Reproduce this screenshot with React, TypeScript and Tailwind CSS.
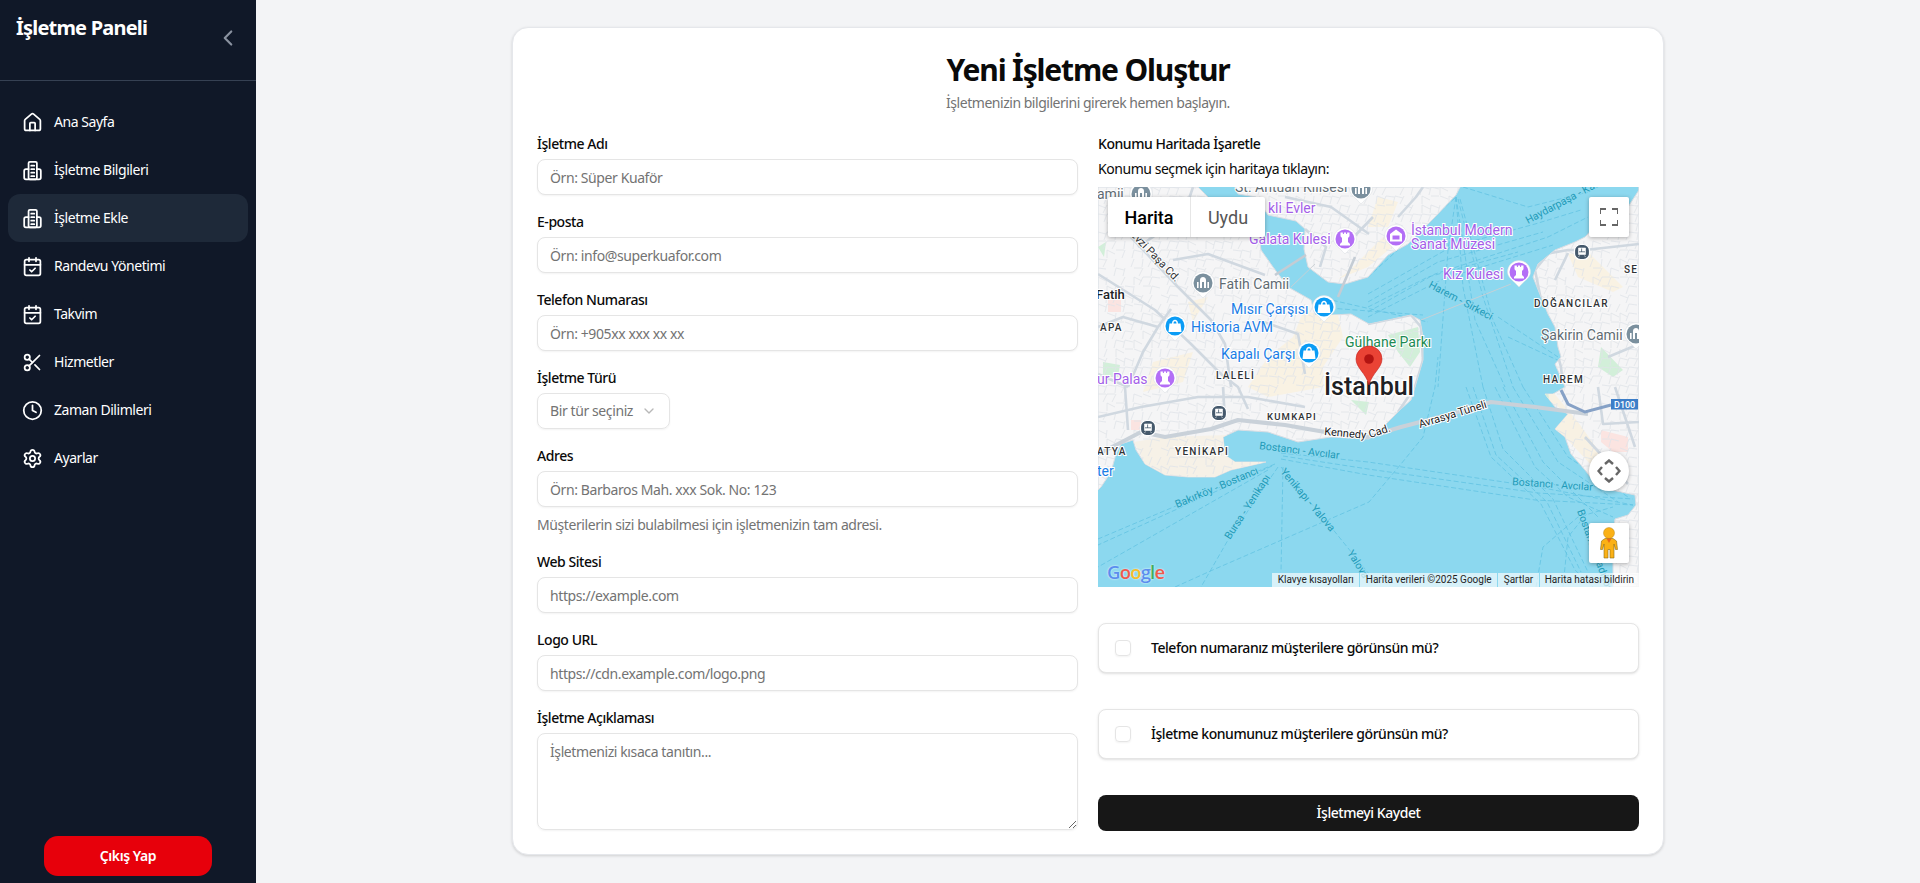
import { CalendarCheck, ChevronDown, ChevronLeft, Clock, House, Scissors, Settings } from "lucide-react";
import type { ReactNode } from "react";

function BuildingIcon() {
  return (
    <svg width="21" height="21" viewBox="0 0 24 24" fill="none" stroke="currentColor" strokeWidth="2" strokeLinecap="round" strokeLinejoin="round">
      <rect x="7.5" y="2" width="9.5" height="20" rx="1.5" />
      <path d="M10.5 6.5h3.5M10.5 10.5h3.5M10.5 14.5h3.5M10.5 18.5h3.5" />
      <path d="M7.5 10.5H4.5a2 2 0 0 0-2 2V20a2 2 0 0 0 2 2h15a2 2 0 0 0 2-2v-7.5a2 2 0 0 0-2-2h-2.5" />
    </svg>
  );
}

const navItems: { label: string; icon: ReactNode; active?: boolean }[] = [
  { label: "Ana Sayfa", icon: <House size={21} /> },
  { label: "İşletme Bilgileri", icon: <BuildingIcon /> },
  { label: "İşletme Ekle", icon: <BuildingIcon />, active: true },
  { label: "Randevu Yönetimi", icon: <CalendarCheck size={21} /> },
  { label: "Takvim", icon: <CalendarCheck size={21} /> },
  { label: "Hizmetler", icon: <Scissors size={21} /> },
  { label: "Zaman Dilimleri", icon: <Clock size={21} /> },
  { label: "Ayarlar", icon: <Settings size={21} /> },
];

function Sidebar() {
  return (
    <aside className="flex h-full w-64 shrink-0 flex-col bg-[#101828] text-white">
      <div className="flex h-[81px] items-start justify-between border-b border-[#364153] pl-4 pr-[15px] pt-[14px]">
        <h2 className="text-xl leading-7 font-bold tracking-[-0.8px]">İşletme Paneli</h2>
        <ChevronLeft size={26} className="mt-[11px] text-[#8a92a0]" />
      </div>
      <nav className="mt-[17px] flex flex-col px-2">
        {navItems.map((item) => (
          <div
            key={item.label}
            className={`flex h-12 items-center gap-[11px] rounded-xl pl-[14px] text-sm tracking-[-0.45px] ${item.active ? "bg-[#1e2939]" : ""}`}
          >
            {item.icon}
            <span>{item.label}</span>
          </div>
        ))}
      </nav>
      <div className="mt-auto flex justify-center pb-[7px]">
        <button className="h-10 w-[168px] rounded-[14px] bg-[#e7000b] text-sm font-semibold tracking-[-0.45px] text-white">Çıkış Yap</button>
      </div>
    </aside>
  );
}

function Field({ label, placeholder, hint }: { label: string; placeholder: string; hint?: string }) {
  return (
    <div className="flex flex-col">
      <label className="mb-2 text-sm leading-[14px] font-medium tracking-[-0.45px] text-[#0a0a0a]">{label}</label>
      <input
        placeholder={placeholder}
        className="h-9 w-full rounded-lg border border-[#e5e5e5] bg-white px-3 text-sm tracking-[-0.4px] shadow-xs outline-none placeholder:text-[#737373]"
      />
      {hint && <p className="mt-2 text-sm tracking-[-0.42px] text-[#737373]">{hint}</p>}
    </div>
  );
}

function CheckCard({ label }: { label: string }) {
  return (
    <div className="flex h-[50px] items-center gap-5 rounded-lg border border-[#e5e5e5] bg-white px-4 shadow-sm">
      <span className="size-4 rounded-[4px] border border-[#e5e5e5] shadow-xs" />
      <span className="text-sm font-medium tracking-[-0.45px] text-[#0a0a0a]">{label}</span>
    </div>
  );
}

/* ---- map drawing ---- */

const land = [
  // european side, south of the golden horn
  "M0 0 L100 0 L120 20 L150 35 L161 50 L163 63 L175 80 L190 100 L213 113 L217 128 L233 128 L253 127 L271 137 L290 133 L313 128 L322 133 L325 150 L325 173 L317 200 L313 213 L303 222 L285 240 L271 252 L233 250 L200 255 L170 245 L140 243 L125 250 L127 268 L137 275 L168 275 L133 283 L117 290 L90 290 L67 288 L47 277 L38 263 L35 253 L23 257 L18 267 L13 285 L3 300 L0 303 Z",
  // beyoglu side
  "M137 0 L140 7 L158 10 L170 28 L198 34 L207 42 L206 62 L210 80 L230 95 L247 97 L270 90 L290 68 L310 57 L337 30 L358 8 L362 0 Z",
  // asian side
  "M541 0 L541 3 L530 20 L503 33 L487 50 L477 55 L457 63 L440 77 L435 90 L443 110 L450 127 L457 140 L460 160 L463 170 L457 177 L467 200 L455 207 L447 207 L457 220 L470 227 L457 242 L467 250 L473 267 L487 283 L500 300 L537 308 L538 318 L530 328 L517 332 L515 350 L515 385 L515 400 L541 400 Z",
];

function streetPath() {
  let d = "";
  for (let x = 0; x < 560; x += 9) {
    for (let y = 0; y < 400; y += 9) {
      const h = (x * 7 + y * 13 + x * y) % 17;
      const dx = (h % 5) - 2;
      if (h % 3 !== 0) d += `M${x} ${y}l8 ${2 + dx}`;
      if (h % 4 !== 1) d += `M${x} ${y}l${dx - 2} 8`;
    }
  }
  return d;
}

const majorRoads = [
  "M0 87L57 123L93 157L123 187L140 200L150 222",
  "M33 50L80 100L113 133L127 157L133 200",
  "M0 187L30 200M30 200L45 165L60 140L73 122",
  "M75 73L110 67L167 88",
  "M0 230L43 220L100 210L150 210L207 220",
  "M125 200L127 233M27 200L30 243",
  "M160 133L200 147L207 187",
  "M187 10L233 20L271 47M300 30L318 10L325 0",
  "M447 67L470 63L487 63L541 57",
  "M450 67L437 83L443 113L455 150L463 180L465 200",
  "M457 93L470 66M510 170L541 157M517 200L537 260M487 250L530 297M500 200L505 237L541 235",
  "M40 60L85 30L95 0M0 140L25 130L60 140",
  "M207 42L228 60L222 80M246 60L275 30",
];

const ferryLines = [
  "M183 266L270 275L440 300L535 318",
  "M183 272L270 288L437 313L535 318",
  "M185 269L270 282L440 306L535 312",
  "M177 277L0 352",
  "M174 279L0 358",
  "M170 283L0 380",
  "M180 280L130 353L103 400",
  "M183 280L233 340L271 387",
  "M185 280L183 385",
  "M77 400L117 382L271 315L303 277L325 250L337 200L340 170",
  "M368 200L393 270L443 317L477 383L495 400",
  "M375 200L398 268L449 315L483 385",
  "M385 200L405 262L455 312L490 385",
  "M397 200L437 280L470 310L515 330",
  "M415 200L460 275L520 315",
  "M405 200L445 275L500 330",
  "M425 200L470 270L530 310",
  "M270 107L353 60L437 37L483 23",
  "M270 125L337 87L450 50L490 30",
  "M270 115L340 75L445 45",
  "M270 130L345 92L455 58",
  "M270 120L330 90L420 65",
  "M358 10L350 63L340 200",
  "M358 10L377 133L407 200",
  "M362 12L395 133L425 200",
  "M358 10L365 100L385 200",
  "M360 12L385 110L415 200",
  "M270 90L358 10",
  "M365 0L430 20L490 5",
  "M410 150L470 178",
  "M400 130L460 170",
  "M220 110L330 135",
  "M217 120L325 128",
  "M438 400L445 360L480 330L515 320",
  "M465 400L470 350L490 325",
];

function Pin({ x, y, color, kind }: { x: number; y: number; color: string; kind: "rook" | "bag" | "temple" | "museum" }) {
  return (
    <g transform={`translate(${x} ${y})`}>
      <path d="M-11.5 0A11.5 11.5 0 1 1 11.5 0C11.5 6 5 9 0 15C-5 9 -11.5 6 -11.5 0Z" fill="#fff" stroke="#d9dde0" strokeWidth="0.5" />
      <circle r="9.5" fill={color} />
      {kind === "rook" && <path d="M-4.5 -6.5h2.4v1.6h1v-1.6h2.2v1.6h1v-1.6H4.5v3.8L3 -1V3L5 5V6.5H-5V5L-3 3V-1L-4.5 -2.7Z" fill="#fff" />}
      {kind === "bag" && <path d="M-5.5 -2.5h11L6.5 6h-13ZM-3 -2.5C-3 -7.5 3 -7.5 3 -2.5H1.5C1.5 -5.5 -1.5 -5.5 -1.5 -2.5Z" fill="#fff" />}
      {kind === "temple" && <path d="M-6 5V-1h1.6v6ZM-3 5V-3C-3 -7 3 -7 3 -3V5H1V-1H-1V5ZM4.4 5V-1H6V5Z" fill="#fff" />}
      {kind === "museum" && <path d="M-6 -2L0 -6.5L6 -2V5.5H-6ZM-3.5 -.5V3.5H3.5V-.5Z" fill="#fff" fillRule="evenodd" />}
    </g>
  );
}

function Transit({ x, y }: { x: number; y: number }) {
  return (
    <g transform={`translate(${x} ${y})`}>
      <rect x="-7.5" y="-7.5" width="15" height="15" rx="6" fill="#45596c" stroke="#fff" strokeWidth="1.2" />
      <path d="M-3.5 -4H3.5V2.5H-3.5Z M-2.5 3.5L-3.5 5M2.5 3.5L3.5 5" fill="#fff" stroke="#fff" strokeWidth="0.6" />
      <path d="M-.4 -3.5V0M-3 -.2H3" stroke="#45596c" strokeWidth="0.8" />
    </g>
  );
}

type Lbl = { t: string; x: number; y: number; c: string; s?: number; w?: number; ls?: number; r?: number; halo?: string };

const PURPLE = "#a35ee8";
const BLUE = "#1a7de6";
const GREY = "#5f6b72";
const DARK = "#2f3235";
const TEAL = "#1f9bb8";
const WATER = "#8cd8ef";

const labels: Lbl[] = [
  { t: "amii", x: -1, y: 12, c: GREY, s: 14 },
  { t: "St. Antuan Kilisesi", x: 137, y: 5, c: GREY, s: 14 },
  { t: "kli Evler", x: 170, y: 26, c: PURPLE, s: 14 },
  { t: "Galata Kulesi", x: 151, y: 57, c: PURPLE, s: 14 },
  { t: "Fevzi Paşa Cd.", x: 28, y: 44, c: DARK, s: 11, r: 46 },
  { t: "Fatih Camii", x: 121, y: 102, c: GREY, s: 14 },
  { t: "Fatih", x: -2, y: 112, c: "#202124", s: 13, w: 500 },
  { t: "Mısır Çarşısı", x: 133, y: 127, c: BLUE, s: 14 },
  { t: "Historia AVM", x: 93, y: 145, c: BLUE, s: 14 },
  { t: "APA", x: 2, y: 144, c: DARK, s: 10, w: 500, ls: 1.3 },
  { t: "Kapalı Çarşı", x: 123, y: 172, c: BLUE, s: 14 },
  { t: "ur Palas", x: -1, y: 197, c: PURPLE, s: 14 },
  { t: "LALELİ", x: 118, y: 192, c: DARK, s: 10, w: 500, ls: 1.3 },
  { t: "Gülhane Parkı", x: 247, y: 160, c: "#1b8a52", s: 14 },
  { t: "İstanbul", x: 226, y: 208, c: "#202124", s: 25, w: 500 },
  { t: "İstanbul Modern", x: 313, y: 48, c: PURPLE, s: 14 },
  { t: "Sanat Müzesi", x: 313, y: 62, c: PURPLE, s: 14 },
  { t: "Kız Kulesi", x: 345, y: 92, c: PURPLE, s: 14 },
  { t: "DOĞANCILAR", x: 436, y: 120, c: DARK, s: 10, w: 500, ls: 1.3 },
  { t: "SE", x: 526, y: 86, c: DARK, s: 10, w: 500, ls: 1.3 },
  { t: "Şakirin Camii", x: 443, y: 153, c: GREY, s: 14 },
  { t: "HAREM", x: 445, y: 196, c: DARK, s: 10, w: 500, ls: 1.3 },
  { t: "KUMKAPI", x: 169, y: 233, c: DARK, s: 9.5, w: 500, ls: 1.2 },
  { t: "YENİKAPI", x: 77, y: 268, c: DARK, s: 10, w: 500, ls: 1.3 },
  { t: "ATYA", x: -1, y: 268, c: DARK, s: 10, w: 500, ls: 1.3 },
  { t: "ter", x: -1, y: 289, c: BLUE, s: 14 },
  { t: "Kennedy", x: 226, y: 248, c: "#202124", s: 11, r: 5 },
  { t: "Cad.", x: 272, y: 251, c: "#202124", s: 11, r: -18 },
  { t: "Avrasya Tüneli", x: 322, y: 241, c: "#202124", s: 11, r: -17 },
  { t: "Bostancı - Avcılar", x: 161, y: 262, c: TEAL, s: 10.5, r: 7, halo: WATER },
  { t: "Bostancı - Avcılar", x: 414, y: 298, c: TEAL, s: 10.5, r: 4, halo: WATER },
  { t: "Bakırköy - Bostancı", x: 79, y: 321, c: TEAL, s: 10.5, r: -23, halo: WATER },
  { t: "Bursa - Yenikapı", x: 132, y: 353, c: TEAL, s: 10.5, r: -57, halo: WATER },
  { t: "Yenikapı - Yalova", x: 182, y: 285, c: TEAL, s: 10.5, r: 50, halo: WATER },
  { t: "Yalova", x: 249, y: 366, c: TEAL, s: 10.5, r: 58, halo: WATER },
  { t: "Bostancı - Kadıköy", x: 479, y: 324, c: TEAL, s: 10.5, r: 70, halo: WATER },
  { t: "Haydarpaşa - Kadıköy", x: 430, y: 37, c: TEAL, s: 10.5, r: -28, halo: WATER },
  { t: "Harem - Sirkeci", x: 330, y: 100, c: TEAL, s: 10.5, r: 28, halo: WATER },
];

function CityMap() {
  return (
    <svg width="541" height="400" viewBox="0 0 541 400" className="block" fontFamily="Roboto, sans-serif">
      <defs>
        <clipPath id="land-clip">
          {land.map((d) => (
            <path key={d} d={d} />
          ))}
        </clipPath>
      </defs>
      <rect width="541" height="400" fill={WATER} />
      <g fill="none" stroke="#62c3e2" strokeWidth="0.8" strokeDasharray="5 2.5">
        {ferryLines.map((d) => (
          <path key={d} d={d} />
        ))}
      </g>
      {land.map((d) => (
        <path key={d} d={d} fill="#f5f5f6" stroke="#d8dde3" strokeWidth="1" />
      ))}
      <g clipPath="url(#land-clip)">
        {/* neighbourhood tints */}
        <path d="M205 125L240 128L245 150L225 180L225 200L170 210L150 200L170 170L195 150ZM270 80L300 55L285 50L250 85L240 92ZM280 10L300 15L290 40L270 40ZM470 67L490 65L525 100L515 105L480 90ZM55 175L95 165L85 195L45 205ZM90 115L110 110L95 135Z" fill="#f9f2e3" />
        <path d="M36 255L65 250L130 248L130 268L168 276L133 283L117 290L90 290L67 288L47 277Z" fill="#f6f1e7" />
        <path d="M442 207L470 227L457 242L467 250L495 280L505 270L480 235L455 205Z" fill="#f8f1e3" />
        <path d="M290 148L320 140L322 165L312 180L300 165ZM253 213L271 215L268 228ZM503 160L525 183L515 190L500 180ZM440 207L450 205L452 220ZM0 60L8 55L6 70ZM5 175L22 178L20 190L5 190Z" fill="#d2efd9" />
        <path d="M503 243L530 250L530 265L515 265L503 255ZM10 113L23 113L23 125L10 125ZM33 233L43 233L43 243L33 243Z" fill="#fbe4e1" />
        <path d={streetPath()} fill="none" stroke="#dfe3e8" strokeWidth="0.8" />
        <g fill="none" stroke="#d0d8e0" strokeWidth="2.6" strokeLinejoin="round">
          {majorRoads.map((d) => (
            <path key={d} d={d} />
          ))}
          <path d="M270 137L313 128L323 140L325 173L317 200L300 225" />
        </g>
      </g>
      {/* bridges and tunnels */}
      <path d="M177 88L208 68M240 110L257 70" fill="none" stroke="#c4ccd4" strokeWidth="2.6" />
      <path d="M193 100L217 77M323 133L413 97" fill="none" stroke="#c9cfd4" strokeWidth="0.9" />
      <path d="M0 267L20 257L43 245L67 250L113 242L140 233L187 238L227 245L270 250L303 240L353 227L393 215L437 220L490 227" fill="none" stroke="#c9d1d9" strokeWidth="4" strokeLinejoin="round" />
      <path d="M463 203L470 217L487 225L513 218" fill="none" stroke="#86a1c6" strokeWidth="3" />
      <rect x="513" y="212" width="27" height="10.5" fill="#3d7ec8" />
      <text x="516" y="220.5" fontSize="9" fontWeight="500" fill="#fff">D100</text>

      <Pin x={43} y={7} color="#7b909e" kind="temple" />
      <Pin x={263} y={2} color="#7b909e" kind="temple" />
      <Pin x={105} y={96} color="#7b909e" kind="temple" />
      <Pin x={538} y={147} color="#7b909e" kind="temple" />
      <Pin x={247} y={52} color="#b36ef6" kind="rook" />
      <Pin x={67} y={191} color="#b36ef6" kind="rook" />
      <Pin x={421} y={85} color="#b36ef6" kind="rook" />
      <Pin x={298} y={49} color="#b36ef6" kind="museum" />
      <Pin x={226} y={120} color="#0b9cf5" kind="bag" />
      <Pin x={77} y={139} color="#0b9cf5" kind="bag" />
      <Pin x={211} y={166} color="#0b9cf5" kind="bag" />
      <Transit x={484} y={65} />
      <Transit x={50} y={241} />
      <Transit x={121} y={226} />

      {labels.map((l) => (
        <text
          key={l.t + l.x}
          x={l.x}
          y={l.y}
          fill={l.c}
          fontSize={l.s}
          fontWeight={l.w ?? 400}
          letterSpacing={l.ls}
          stroke={l.halo ?? "#fff"}
          strokeWidth={l.s && l.s > 20 ? 3 : 2}
          paintOrder="stroke"
          transform={l.r ? `rotate(${l.r} ${l.x} ${l.y})` : undefined}
        >
          {l.t}
        </text>
      ))}

      {/* selected location */}
      <path d="M271 198C268 186 258 181 258 172A13 13 0 1 1 284 172C284 181 274 186 271 198Z" fill="#ea4335" stroke="#c5221f" strokeWidth="0.6" />
      <circle cx="271" cy="172" r="4.8" fill="#b31412" />
    </svg>
  );
}

function MapPanel() {
  return (
    <div className="relative h-[400px] overflow-hidden bg-[#8cd8ef]">
      <CityMap />
      <div className="absolute top-2.5 left-2.5 flex h-10 rounded-[2px] bg-white font-['Roboto',sans-serif] text-[18px] shadow-[0_1px_4px_rgba(0,0,0,0.3)]">
        <div className="flex w-[82px] items-center justify-center font-medium text-black">Harita</div>
        <div className="flex w-[75px] items-center justify-center border-l border-[#e6e6e6] text-[#565656]">Uydu</div>
      </div>
      <div className="absolute top-2.5 right-2.5 flex size-10 items-center justify-center rounded-[2px] bg-white shadow-[0_1px_4px_rgba(0,0,0,0.3)]">
        <svg width="18" height="18" viewBox="0 0 18 18" fill="none" stroke="#666" strokeWidth="2">
          <path d="M0 6V1H6M12 1H18V6M18 12V17H12M6 17H0V12" />
        </svg>
      </div>
      <div className="absolute top-[264px] right-2.5 flex size-10 items-center justify-center rounded-full bg-white shadow-[0_1px_4px_rgba(0,0,0,0.3)]">
        <svg width="24" height="24" viewBox="0 0 24 24" fill="none" stroke="#666" strokeWidth="2.4">
          <path d="M8 5L12 1.5L16 5M8 19L12 22.5L16 19M5 8L1.5 12L5 16M19 8L22.5 12L19 16" />
        </svg>
      </div>
      <div className="absolute top-[336px] right-2.5 flex size-10 items-center justify-center rounded-[2px] bg-white shadow-[0_1px_4px_rgba(0,0,0,0.3)]">
        <svg width="18" height="32" viewBox="0 0 18 32">
          <circle cx="9" cy="6" r="5.5" fill="#fbb116" stroke="#a87a10" strokeWidth="0.4" />
          <path d="M5 11.5H13L16.5 14L17.5 22.5H15.5L14 17V31H10V22.5H8V31H4V17L2.5 22.5H.5L1.5 14Z" fill="#fbb116" stroke="#8a6b18" strokeWidth="0.6" />
          <path d="M6.5 11.5H11.5L9 16Z" fill="#e8681c" />
        </svg>
      </div>
      <div className="absolute bottom-[3px] left-[9px] font-['Open_Sans',sans-serif] text-[18.5px] leading-6 font-semibold tracking-[-0.8px] [text-shadow:0_0_2px_#fff]">
        <span className="text-[#5a8eee]">G</span>
        <span className="text-[#ee5a4d]">o</span>
        <span className="text-[#f5bd2c]">o</span>
        <span className="text-[#5a8eee]">g</span>
        <span className="text-[#43ad5b]">l</span>
        <span className="text-[#ee5a4d]">e</span>
      </div>
      <div className="absolute right-0 bottom-0 flex h-3.5 gap-px font-['Roboto',sans-serif] text-[10px] leading-[14px] text-[#1f1f1f]">
        <span className="bg-white/65 px-[5.5px]">Klavye kısayolları</span>
        <span className="bg-white/65 px-[5.5px]">Harita verileri ©2025 Google</span>
        <span className="bg-white/65 px-[5.5px]">Şartlar</span>
        <span className="bg-white/65 px-[5px]">Harita hatası bildirin</span>
      </div>
    </div>
  );
}

function Form() {
  return (
    <div className="grid grid-cols-2 gap-x-5">
      <div className="flex flex-col gap-5">
        <Field label="İşletme Adı" placeholder="Örn: Süper Kuaför" />
        <Field label="E-posta" placeholder="Örn: info@superkuafor.com" />
        <Field label="Telefon Numarası" placeholder="Örn: +905xx xxx xx xx" />
        <div className="flex flex-col">
          <label className="mb-2 text-sm leading-[14px] font-medium tracking-[-0.45px] text-[#0a0a0a]">İşletme Türü</label>
          <div className="flex h-9 w-[133px] items-center justify-between rounded-lg border border-[#e5e5e5] px-3 text-sm tracking-[-0.4px] text-[#737373] shadow-xs">
            <span>Bir tür seçiniz</span>
            <ChevronDown size={16} className="opacity-50" />
          </div>
        </div>
        <Field label="Adres" placeholder="Örn: Barbaros Mah. xxx Sok. No: 123" hint="Müşterilerin sizi bulabilmesi için işletmenizin tam adresi." />
        <Field label="Web Sitesi" placeholder="https://example.com" />
        <Field label="Logo URL" placeholder="https://cdn.example.com/logo.png" />
        <div className="flex flex-col">
          <label className="mb-2 text-sm leading-[14px] font-medium tracking-[-0.45px] text-[#0a0a0a]">İşletme Açıklaması</label>
          <textarea
            placeholder="İşletmenizi kısaca tanıtın..."
            className="block h-[97px] w-full rounded-lg border border-[#e5e5e5] px-3 py-2 text-sm tracking-[-0.4px] shadow-xs outline-none placeholder:text-[#737373]"
          />
        </div>
      </div>
      <div className="flex flex-col">
        <label className="mb-2 text-sm leading-[14px] font-medium tracking-[-0.45px] text-[#0a0a0a]">Konumu Haritada İşaretle</label>
        <p className="mb-2 text-sm tracking-[-0.45px] text-[#0a0a0a]">Konumu seçmek için haritaya tıklayın:</p>
        <MapPanel />
        <div className="mt-9 flex flex-col gap-9">
          <CheckCard label="Telefon numaranız müşterilere görünsün mü?" />
          <CheckCard label="İşletme konumunuz müşterilere görünsün mü?" />
          <button className="h-9 rounded-lg bg-[#171717] text-sm font-medium tracking-[-0.45px] text-white">İşletmeyi Kaydet</button>
        </div>
      </div>
    </div>
  );
}

export default function App() {
  return (
    <div className="flex h-screen overflow-hidden bg-[#f3f4f6] font-['Noto_Sans',sans-serif]">
      <Sidebar />
      <main className="flex flex-1 justify-center pt-[27px]">
        <div className="h-[828px] w-[1152px] rounded-2xl border border-[#e5e7eb] bg-white p-6 shadow-[0_1px_3px_rgba(0,0,0,0.15)]">
          <h1 className="text-center text-3xl leading-9 font-bold tracking-[-1.15px] text-[#0a0a0a]">Yeni İşletme Oluştur</h1>
          <p className="mt-[5px] mb-6 text-center text-sm tracking-[-0.47px] text-[#737373]">İşletmenizin bilgilerini girerek hemen başlayın.</p>
          <Form />
        </div>
      </main>
    </div>
  );
}
